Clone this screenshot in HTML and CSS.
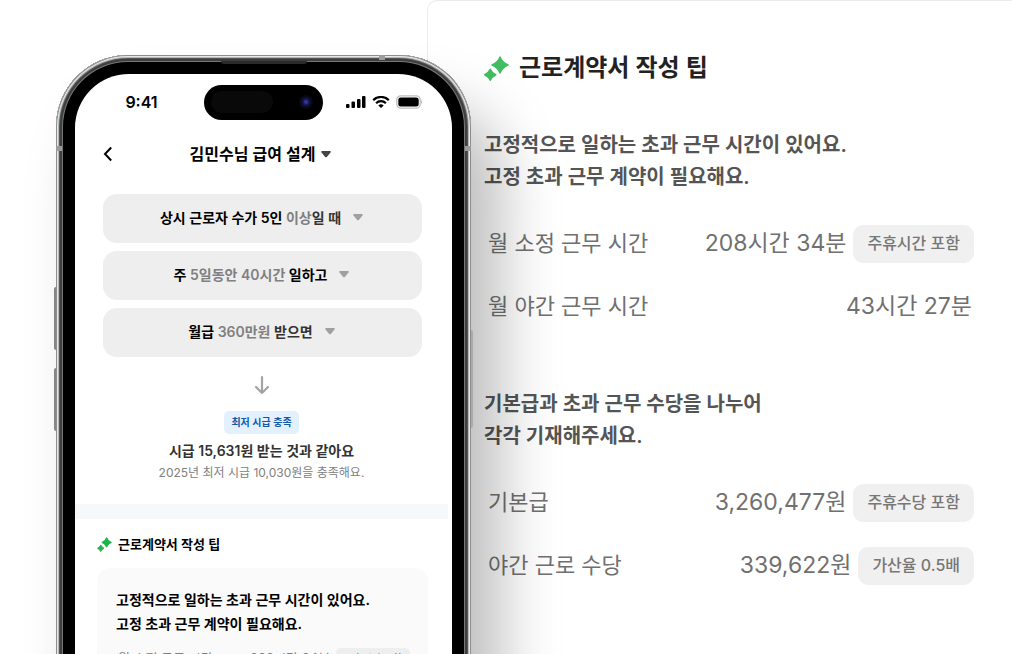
FILE: index.html
```html
<!DOCTYPE html>
<html lang="ko">
<head>
<meta charset="utf-8">
<meta name="viewport" content="width=device-width, initial-scale=1">
<title>급여 설계</title>
<link rel="stylesheet" href="styles.css">
</head>
<body>
<svg class="defs" aria-hidden="true">
  <symbol id="caret" viewBox="0 0 10 8"><path d="M1.300 1h7.400c1 0 1.400.9.800 1.600L6 6.800c-.5.7-1.500.7-2 0L.5 2.600C-.1 1.900.3 1 1.300 1z" fill="currentColor"/></symbol>
  <symbol id="sparkle" viewBox="0 0 24 24"><g fill="currentColor" stroke="currentColor" stroke-width="1.400" stroke-linejoin="round"><path d="M15.400.9Q17.600 6.400 23.100 8.600Q17.600 10.800 15.400 16.300Q13.200 10.800 7.700 8.600Q13.200 6.400 15.400.9z"/><path d="M6 12.700Q7.700 16.300 11.300 18Q7.700 19.700 6 23.300Q4.300 19.700.7 18Q4.300 16.300 6 12.700z"/></g></symbol>
</svg>
<main class="stage">
  <section class="phone" aria-label="급여 설계 화면">
    <span class="side volume-up"></span>
    <span class="side volume-down"></span>
    <span class="side power"></span>
    <span class="band band-left"></span>
    <span class="band band-right"></span>
    <span class="band band-top"></span>
    <span class="speaker"></span>
    <div class="screen">
      <div class="status">
        <span class="time">9:41</span>
        <span class="island"><span class="sensor"></span><span class="lens"></span></span>
        <span class="signals">
          <svg width="20" height="12" viewBox="0 0 20 12"><g fill="#000"><rect x="0" y="8" width="3.500" height="4" rx="1"/><rect x="5.500" y="5.500" width="3.500" height="6.500" rx="1"/><rect x="11" y="3" width="3.500" height="9" rx="1"/><rect x="16" y="0" width="3.500" height="12" rx="1"/></g></svg>
          <svg width="18" height="12" viewBox="0 0 18 12"><g fill="none" stroke="#000" stroke-width="2.200"><path d="M1.200 4.100a11.200 11.200 0 0 1 15.600 0"/><path d="M4.100 7.200a7 7 0 0 1 9.800 0"/></g><path d="M6.300 9.400a4 4 0 0 1 5.400 0L9 12z" fill="#000"/></svg>
          <svg width="27" height="14" viewBox="0 0 27 14"><rect x=".8" y=".8" width="23.400" height="12.400" rx="4" fill="#fff" stroke="#bdbdbd" stroke-width="1.300"/><rect x="2.300" y="2.400" width="20.400" height="9.200" rx="2.500" fill="#000"/><path d="M25.300 5c1.300.5 1.300 3.500 0 4z" fill="#aaa"/></svg>
        </span>
      </div>
      <header class="topbar">
        <button class="back" aria-label="뒤로"><svg width="10" height="16" viewBox="0 0 10 16"><path d="M8.200 1.500 2 8l6.200 6.500" fill="none" stroke="#000" stroke-width="2"/></svg></button>
        <button class="picker">김민수님 급여 설계 <svg class="caret" width="10" height="8"><use href="#caret"/></svg></button>
      </header>
      <div class="choices">
        <button class="choice"><span>상시 근로자 수가 5인 <em>이상</em><span class="soft">일 때</span></span><svg class="caret" width="10" height="8"><use href="#caret"/></svg></button>
        <button class="choice"><span>주 <em>5일동안 40시간</em> 일하고</span><svg class="caret" width="10" height="8"><use href="#caret"/></svg></button>
        <button class="choice"><span>월급 <em>360만원</em> <span class="soft">받으면</span></span><svg class="caret" width="10" height="8"><use href="#caret"/></svg></button>
      </div>
      <div class="result">
        <svg class="arrow" width="16" height="20" viewBox="0 0 16 20"><path d="M8 2V18M2 12l6 6 6-6" fill="none" stroke="#a3a3a3" stroke-width="2.200" stroke-linecap="round" stroke-linejoin="round"/></svg>
        <span class="pass">최저 시급 충족</span>
        <strong class="hourly">시급 15,631원 받는 것과 같아요</strong>
        <span class="note">2025년 최저 시급 10,030원을 충족해요.</span>
      </div>
      <div class="divider"></div>
      <div class="tip">
        <h2 class="tip-title"><svg width="15" height="15"><use href="#sparkle"/></svg>근로계약서 작성 팁</h2>
        <div class="tip-card">
          <p class="tip-text">고정적으로 일하는 초과 근무 시간이 있어요.<br>고정 초과 근무 계약이 필요해요.</p>
          <div class="tip-row"><span>월 소정 근무 시간</span><span class="tip-value">208시간 34분</span><span class="tip-badge">주휴시간 포함</span></div>
        </div>
      </div>
    </div>
  </section>

  <section class="panel">
    <h1 class="panel-title"><svg width="25" height="25"><use href="#sparkle"/></svg>근로계약서 작성 팁</h1>
    <p class="lead">고정적으로 일하는 초과 근무 시간이 있어요.<br>고정 초과 근무 계약이 필요해요.</p>
    <dl class="rows">
      <div class="row"><dt>월 소정 근무 시간</dt><dd>208시간 34분<span class="badge">주휴시간 포함</span></dd></div>
      <div class="row"><dt>월 야간 근무 시간</dt><dd class="plain">43시간 27분</dd></div>
    </dl>
    <p class="lead">기본급과 초과 근무 수당을 나누어<br>각각 기재해주세요.</p>
    <dl class="rows">
      <div class="row"><dt>기본급</dt><dd>3,260,477원<span class="badge">주휴수당 포함</span></dd></div>
      <div class="row"><dt>야간 근로 수당</dt><dd>339,622원<span class="badge">가산율 0.5배</span></dd></div>
    </dl>
  </section>
</main>
</body>
</html>
```
FILE: styles.css
```css
* { box-sizing: border-box; }
body {
  margin: 0;
  background: #fff;
  color: #000;
  font-family: Inter, "Noto Sans CJK KR", sans-serif;
}
h1, h2, p, dl, dd { margin: 0; }
button {
  border: 0;
  padding: 0;
  background: none;
  color: inherit;
  font: inherit;
  cursor: pointer;
}
svg { display: block; flex: none; }
.defs { position: absolute; width: 0; height: 0; }

.stage {
  display: flex;
  align-items: flex-start;
  height: 100vh;
  overflow: hidden;
}

/* Phone */
.phone {
  position: relative;
  z-index: 1;
  flex: none;
  width: 415px;
  min-height: 130vh;
  margin: 55px 0 0 56px;
  padding: 19px;
  border-radius: 72px;
  background: #000;
  box-shadow:
    inset 0 0 0 1px #8c8c8c,
    inset 0 0 0 2px #e9e9e9,
    inset 0 0 0 3px #b5b5b5,
    inset 0 0 0 4px #555,
    inset 0 0 0 6px #3d4042,
    inset 0 0 0 7px #777,
    30px 50px 60px rgba(0, 0, 0, 0.26);
}
.side {
  position: absolute;
  left: -2px;
  width: 2px;
  height: 63px;
  border-radius: 2px 0 0 2px;
  background: #858585;
}
.volume-up { top: 232px; }
.volume-down { top: 313px; }
.power {
  top: 275px;
  right: -2px;
  left: auto;
  height: 98px;
  border-radius: 0 2px 2px 0;
  background: #aaa;
}
.band { position: absolute; width: 6px; height: 5px; background: #9c9c9c; }
.band-left { top: 91px; left: 0; }
.band-right { top: 91px; right: 0; }
.band-top { top: 0; right: 86px; }
.speaker {
  position: absolute;
  top: 6px;
  left: 165px;
  width: 86px;
  height: 3px;
  border-radius: 0 0 4px 4px;
  background: #2b2b2b;
}
.screen {
  min-height: 130vh;
  border-radius: 54px;
  background: #fff;
  overflow: hidden;
}
.status {
  display: grid;
  grid-template-columns: 1fr 119px 1fr;
  align-items: center;
  height: 56px;
}
.time {
  padding-left: 4px;
  text-align: center;
  font-size: 16px;
  font-weight: 600;
}
.island {
  display: flex;
  align-items: center;
  justify-content: space-between;
  height: 35px;
  padding: 0 10px 0 7px;
  border-radius: 18px;
  background: #000;
}
.sensor { width: 62px; height: 22px; border-radius: 11px; background: #090909; }
.lens {
  width: 14px;
  height: 14px;
  border-radius: 50%;
  background: radial-gradient(circle, #3437a0 0 1px, #14164f 3px, #0a0a20 5px, #08070c 7px);
}
.signals {
  display: flex;
  align-items: center;
  justify-content: center;
  gap: 6px;
  padding-right: 6px;
}
.topbar {
  display: grid;
  grid-template-columns: 48px 1fr 48px;
  align-items: center;
  height: 48px;
}
.back { display: flex; justify-content: flex-end; padding: 8px 10px 8px 0; }
.picker {
  display: flex;
  align-items: center;
  justify-content: center;
  gap: 6px;
  padding-right: 6px;
  font-size: 16px;
  font-weight: 600;
  line-height: 24px;
}
.picker .caret { color: #444; }
.choices {
  display: flex;
  flex-direction: column;
  gap: 8px;
  padding: 16px 30px 0 28px;
}
.choice {
  display: flex;
  align-items: center;
  justify-content: center;
  gap: 12px;
  height: 49px;
  padding: 0 2px 3px 0;
  border-radius: 14px;
  background: #eee;
  font-size: 14px;
  font-weight: 600;
}
.choice em { color: #808080; font-style: normal; }
.choice .soft { color: #333; }
.choice .caret { color: #a0a0a0; }
.result {
  display: flex;
  flex-direction: column;
  align-items: center;
  padding: 18px 4px 21px 0;
}
.pass {
  margin: 16px 0 5px;
  padding: 0 7px;
  border-radius: 5px;
  background: #e3f1ff;
  color: #1458a8;
  font-size: 10px;
  font-weight: 600;
  line-height: 23px;
}
.hourly { color: #333; font-size: 14px; font-weight: 600; line-height: 24px; }
.note { color: #808080; font-size: 12px; line-height: 20px; }
.divider { height: 15px; margin-right: 4px; background: #f7f8fa; }
.tip { padding: 13px 24px 0 22px; }
.tip-title {
  display: flex;
  align-items: center;
  gap: 6px;
  font-size: 13px;
  font-weight: 600;
  line-height: 24px;
}
.tip-title svg { color: #22b24c; }
.tip-card {
  min-height: 300px;
  margin-top: 12px;
  padding: 20px 18px 20px 19px;
  border-radius: 14px;
  background: #fafafa;
}
.tip-text { font-size: 14px; font-weight: 600; line-height: 24px; }
.tip-row {
  display: flex;
  align-items: center;
  margin-top: 12px;
  padding-left: 2px;
  color: #808080;
  font-size: 13px;
  line-height: 20px;
  white-space: nowrap;
}
.tip-value { margin-left: auto; }
.tip-badge {
  margin-left: 6px;
  padding: 0 8px;
  border-radius: 5px;
  background: #eee;
  font-size: 10px;
  font-weight: 500;
}

/* Detail panel */
.panel {
  flex: 1;
  min-width: 0;
  min-height: 110vh;
  margin-left: -44px;
  padding: 49px 38px 0 56px;
  border: 1px solid #ececec;
  border-right: 0;
  border-radius: 10px 0 0 0;
  background: #fff;
}
.panel-title {
  display: flex;
  align-items: center;
  gap: 10px;
  color: #222;
  font-size: 24px;
  font-weight: 600;
  line-height: 36px;
}
.panel-title svg { color: #42be62; }
.lead {
  margin-top: 43px;
  color: #555;
  font-size: 20px;
  font-weight: 600;
  line-height: 32px;
}
.rows {
  display: flex;
  flex-direction: column;
  gap: 25px;
  margin-top: 32px;
  padding-left: 4px;
}
.rows + .lead { margin-top: 62px; }
.row {
  display: flex;
  align-items: flex-start;
  justify-content: space-between;
  height: 38px;
  color: #707070;
  font-size: 22px;
  line-height: 36px;
  white-space: nowrap;
}
.row dd { display: flex; align-items: flex-start; gap: 7px; font-size: 23px; }
.row .plain { padding-right: 2px; }
.badge {
  padding: 0 14px 2px;
  border-radius: 10px;
  background: #f0f0f0;
  color: #777;
  font-size: 16px;
  font-weight: 500;
  line-height: 36px;
}
```
